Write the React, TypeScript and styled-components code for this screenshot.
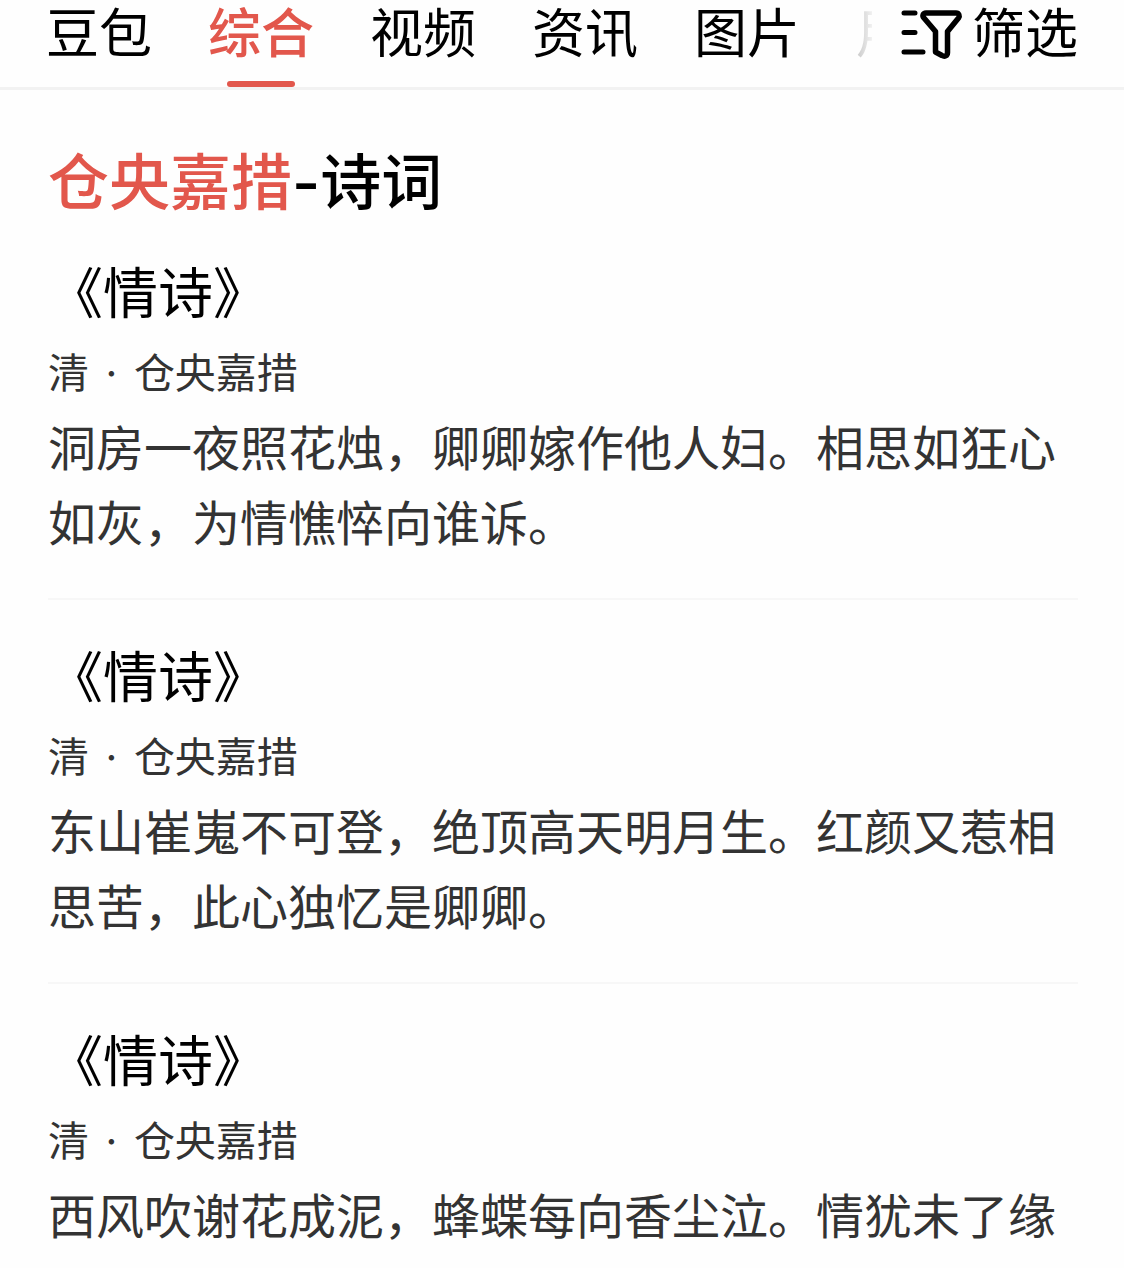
import React, { useState } from 'react';
import styled, { createGlobalStyle } from 'styled-components';

const accent = '#e2574c';

const GlobalStyle = createGlobalStyle`
  * {
    box-sizing: border-box;
  }
  body {
    margin: 0;
    background: #fefefe;
    color: #000;
    font-family: Inter, 'Noto Sans CJK SC', sans-serif;
  }
`;

const Header = styled.header`
  display: flex;
  align-items: flex-start;
  padding: 0 46px;
  border-bottom: 3px solid #f2f2f2;
`;

const TabStrip = styled.nav`
  position: relative;
  flex: 1;
  min-width: 0;
  display: flex;
  gap: 56px;
  overflow: hidden;

  &::after {
    content: '';
    position: absolute;
    inset: 0 0 0 auto;
    width: 24px;
    background: linear-gradient(to right, rgba(254, 254, 254, 0.7), rgba(254, 254, 254, 0.95));
  }
`;

const buttonReset = `
  border: 0;
  padding: 0;
  background: none;
  font-family: inherit;
  font-size: 53px;
  line-height: 68px;
  white-space: nowrap;
  cursor: pointer;
`;

const Tab = styled.button<{ $active: boolean }>`
  ${buttonReset}
  flex: none;
  color: ${({ $active }) => ($active ? accent : '#000')};
  font-weight: ${({ $active }) => ($active ? 500 : 400)};

  &::after {
    content: '';
    display: block;
    width: 68px;
    height: 6px;
    margin: 13px auto 0;
    border-radius: 3px;
    background: ${({ $active }) => ($active ? accent : 'transparent')};
  }
`;

const FilterButton = styled.button`
  ${buttonReset}
  display: flex;
  align-items: center;
  gap: 8px;
  margin-left: 28px;
  color: #000;
`;

const Results = styled.main`
  padding: 60px 46px 0 48px;
`;

const Heading = styled.h1`
  margin: 0;
  font-size: 61px;
  line-height: 66px;
  font-weight: 500;
`;

const Highlight = styled.em`
  color: ${accent};
  font-style: normal;
`;

const Poem = styled.article`
  padding: 37px 0;
  border-bottom: 2px solid #f7f7f7;
`;

const PoemTitle = styled.h2`
  margin: 0;
  font-size: 55px;
  line-height: 80px;
  font-weight: 400;
`;

const Author = styled.p`
  margin: 8px 0 6px;
  color: #333;
  font-size: 41px;
  line-height: 64px;
`;

const Dot = styled.span`
  margin: 0 5px;
`;

const Verse = styled.p`
  margin: 0;
  color: #333;
  font-size: 48px;
  line-height: 75px;
`;

const tabs = ['豆包', '综合', '视频', '资讯', '图片', '用户'];

const poems = [
  '洞房一夜照花烛，卿卿嫁作他人妇。相思如狂心如灰，为情憔悴向谁诉。',
  '东山崔嵬不可登，绝顶高天明月生。红颜又惹相思苦，此心独忆是卿卿。',
  '西风吹谢花成泥，蜂蝶每向香尘泣。情犹未了缘',
];

const FilterIcon = () => (
  <svg
    width="64"
    height="52"
    viewBox="0 0 64 52"
    fill="none"
    stroke="currentColor"
    strokeWidth="5"
    strokeLinecap="round"
    strokeLinejoin="round"
    aria-hidden="true"
  >
    <path d="M4 5h11M4 24.500h11M4 44h19" />
    <path
      strokeWidth="5.500"
      d="M26 5h30c3 0 4 3 2.500 5L47.500 23.500V44.500c0 3.500-3 4.500-5.500 3L35.500 44V23.500L24 10c-2-2-1-5 2-5Z"
    />
  </svg>
);

export default function App() {
  const [active, setActive] = useState('综合');

  return (
    <>
      <GlobalStyle />
      <Header>
        <TabStrip>
          {tabs.map((tab) => (
            <Tab key={tab} type="button" $active={tab === active} onClick={() => setActive(tab)}>
              {tab}
            </Tab>
          ))}
        </TabStrip>
        <FilterButton type="button">
          <FilterIcon />
          筛选
        </FilterButton>
      </Header>
      <Results>
        <Heading>
          <Highlight>仓央嘉措</Highlight>-诗词
        </Heading>
        {poems.map((verse) => (
          <Poem key={verse}>
            <PoemTitle>《情诗》</PoemTitle>
            <Author>
              清 <Dot>·</Dot> 仓央嘉措
            </Author>
            <Verse>{verse}</Verse>
          </Poem>
        ))}
      </Results>
    </>
  );
}
